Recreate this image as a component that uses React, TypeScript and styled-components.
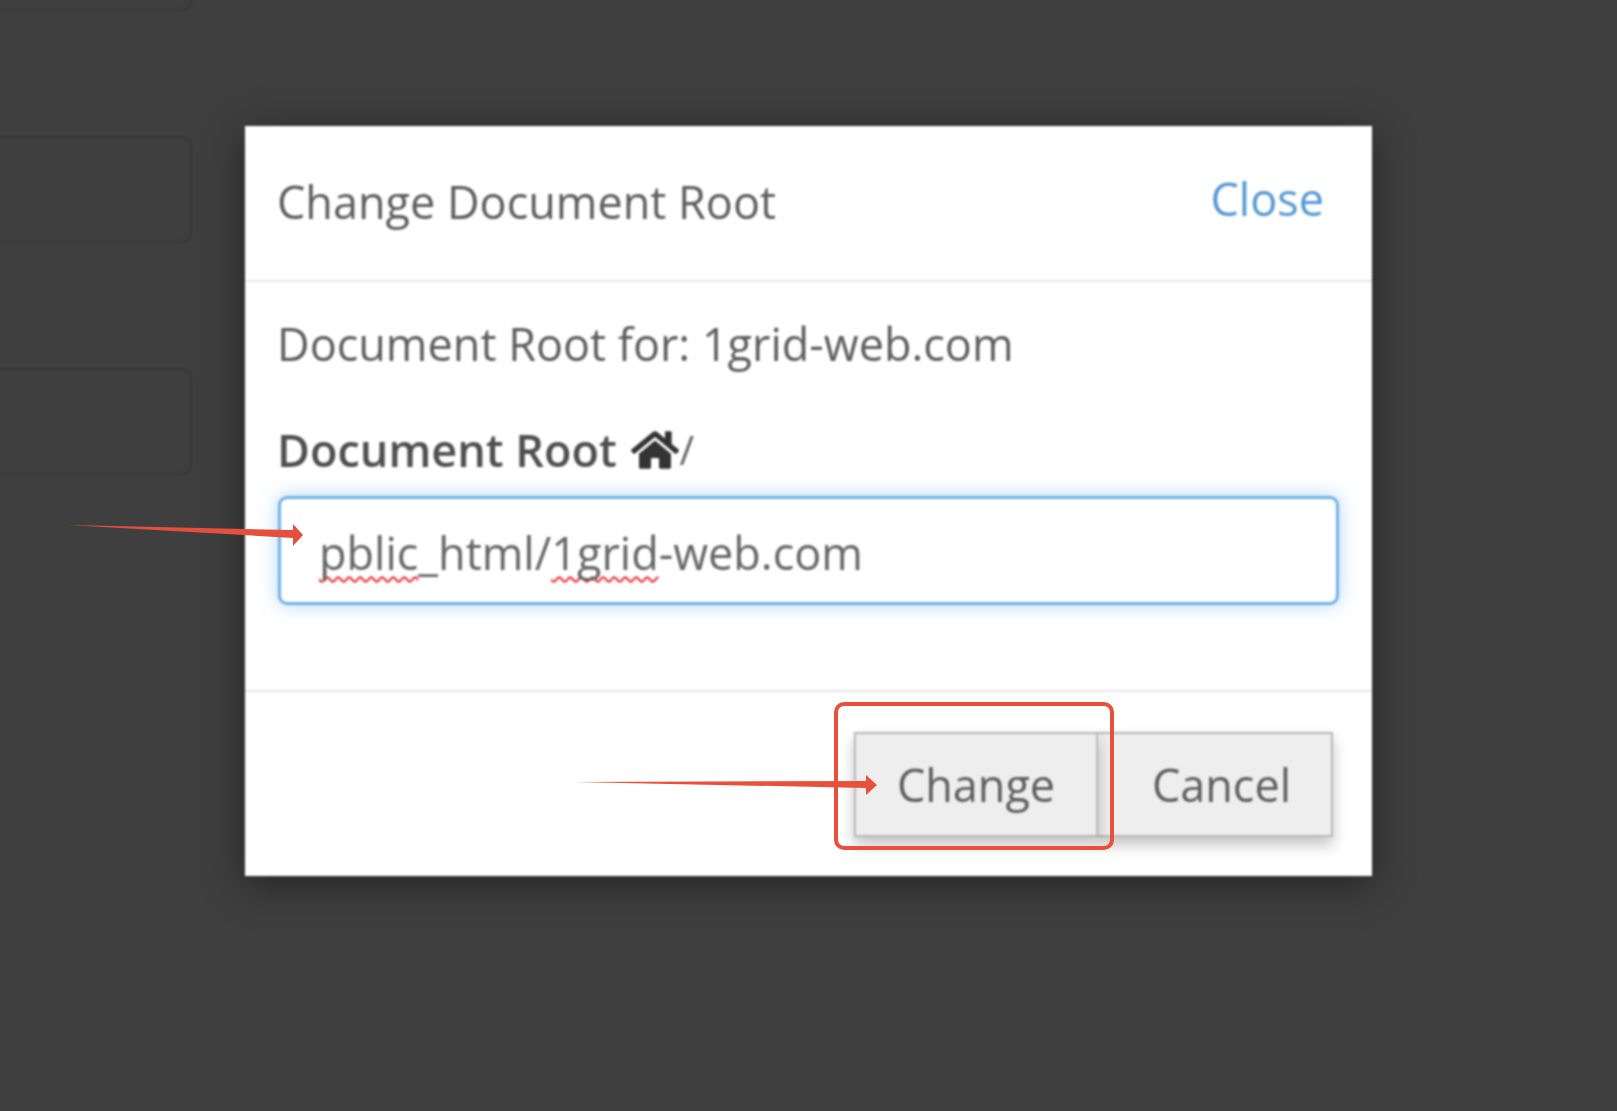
import styled, { createGlobalStyle } from "styled-components";
import { FaHome } from "react-icons/fa";

const GlobalStyle = createGlobalStyle`
  html, body {
    margin: 0;
    padding: 0;
    background: #3f3f3f;
    font-family: "Open Sans", "Noto Sans", sans-serif;
  }
`;

const App = () => {
    return (
        <Page>
            <GlobalStyle />
            <Backdrop>
                <BackCard />
                <BackCard />
                <BackCard />
            </Backdrop>
            <Dialog>
                <Header>
                    <Title>Change Document Root</Title>
                    <CloseLink href="#">Close</CloseLink>
                </Header>
                <Body>
                    <Info>Document Root for: 1grid-web.com</Info>
                    <FieldLabel>
                        Document Root <HomeIcon /><Slash>/</Slash>
                    </FieldLabel>
                    <Field>
                        <Misspelled>pblic</Misspelled>_html/<Misspelled>1grid</Misspelled>-web.com
                    </Field>
                </Body>
                <Footer>
                    <ActionButton $width={244}>Change</ActionButton>
                    <ActionButton $width={235}>Cancel</ActionButton>
                </Footer>
            </Dialog>
            <Highlight />
            <ArrowLayer viewBox="0 0 1617 1111">
                <polygon points="68,525 293,530 293,524 303,535 293,546 293,538" fill="#e4503c" />
                <polygon points="575,782 866,781 866,775 877,785 866,795 866,788" fill="#e8503c" />
            </ArrowLayer>
        </Page>
    );
};

const Page = styled.div`
  position: relative;
  width: 1617px;
  height: 1111px;
  overflow: hidden;
  background-color: #3f3f3f;
`;

const Backdrop = styled.div`
  display: flex;
  flex-direction: column;
  gap: 125px;
  width: 204px;
  margin-top: -96px;
  margin-left: -12px;
  filter: blur(0.8px);
`;

const BackCard = styled.div`
  height: 107px;
  border: 2px solid #373737;
  border-radius: 10px;
  box-sizing: border-box;
`;

const Dialog = styled.div`
  position: absolute;
  left: 245px;
  top: 126px;
  width: 1127px;
  height: 750px;
  display: flex;
  flex-direction: column;
  box-sizing: border-box;
  background-color: #ffffff;
  box-shadow: 0 8px 40px rgba(0, 0, 0, 0.45);
  filter: blur(0.85px);
`;

const Header = styled.div`
  height: 156px;
  flex-shrink: 0;
  display: flex;
  align-items: flex-start;
  justify-content: space-between;
  box-sizing: border-box;
  padding: 52px 48px 0 32px;
  border-bottom: 2px solid #e6e6e6;
`;

const Title = styled.h4`
  margin: 0;
  font-size: 45px;
  line-height: 48px;
  font-weight: 400;
  color: #5e5e5e;
`;

const CloseLink = styled.a`
  margin-top: -3px;
  font-size: 45px;
  line-height: 48px;
  color: #5598d6;
  text-decoration: none;
`;

const Body = styled.div`
  flex: 1;
  box-sizing: border-box;
  padding: 35px 33px 0 33px;
  border-bottom: 2px solid #e6e6e6;
`;

const Info = styled.div`
  margin-left: -1px;
  font-size: 45px;
  line-height: 54px;
  color: #5e5e5e;
`;

const FieldLabel = styled.div`
  display: flex;
  align-items: center;
  margin: 52px 0 0 -1px;
  font-size: 45px;
  line-height: 54px;
  font-weight: 600;
  color: #4f4f4f;
  white-space: pre;
`;

const HomeIcon = styled(FaHome)`
  width: 48px;
  height: 44px;
  margin-left: 3px;
  color: #333333;
`;

const Slash = styled.span`
  font-size: 40px;
  font-weight: 400;
  color: #666666;
`;

const Field = styled.div`
  height: 109px;
  margin-top: 19px;
  box-sizing: border-box;
  padding: 26px 0 0 38px;
  border: 3px solid #6fb0e9;
  border-radius: 9px;
  box-shadow: 0 0 18px rgba(102, 175, 233, 0.5);
  font-size: 45px;
  line-height: 56px;
  color: #666666;
`;

const Misspelled = styled.span`
  text-decoration: underline wavy #f01a1e 2px;
  text-decoration-skip-ink: none;
  text-underline-offset: 6px;
`;

const Footer = styled.div`
  display: flex;
  justify-content: flex-end;
  flex-shrink: 0;
  height: 184px;
  box-sizing: border-box;
  padding: 40px 39px 0 0;
`;

const ActionButton = styled.button<{ $width: number }>`
  width: ${(p) => p.$width}px;
  height: 105px;
  border: 2px solid #b8b8b8;
  background-color: #eeeeee;
  box-shadow: 0 8px 14px rgba(0, 0, 0, 0.24);
  font-family: inherit;
  font-size: 45px;
  color: #5e5e5e;
  padding: 0;

  & + & {
    border-left: none;
    padding-left: 14px;
  }

  &:first-child {
    position: relative;
    z-index: 1;
  }
`;

const Highlight = styled.div`
  position: absolute;
  left: 834px;
  top: 702px;
  width: 280px;
  height: 148px;
  box-sizing: border-box;
  border: 4px solid #e8503c;
  border-radius: 10px;
`;

const ArrowLayer = styled.svg`
  position: absolute;
  left: 0;
  top: 0;
  width: 1617px;
  height: 1111px;
  pointer-events: none;
`;

export default App;
